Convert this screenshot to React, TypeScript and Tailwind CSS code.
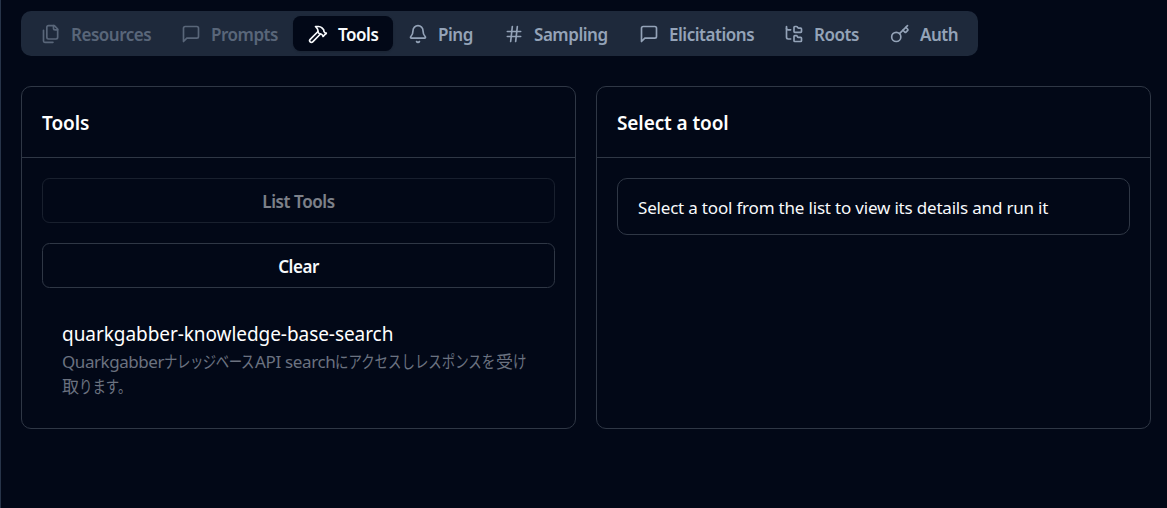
import type { ReactNode } from "react";
import { Bell, FolderTree, Hammer, Hash } from "lucide-react";

function Glyph({ children }: { children: ReactNode }) {
  return (
    <svg viewBox="0 0 24 24" fill="none" stroke="currentColor" strokeWidth="2" strokeLinecap="round" strokeLinejoin="round" className="size-5">
      {children}
    </svg>
  );
}

const FilesIcon = () => (
  <Glyph>
    <path d="M20 7h-3a2 2 0 0 1-2-2V2" />
    <path d="M9 18a2 2 0 0 1-2-2V4a2 2 0 0 1 2-2h7l4 4v10a2 2 0 0 1-2 2Z" />
    <path d="M3 7.6v12.8A1.6 1.6 0 0 0 4.6 22h9.8" />
  </Glyph>
);

const MessageIcon = () => (
  <Glyph>
    <path d="M21 15a2 2 0 0 1-2 2H7l-4 4V5a2 2 0 0 1 2-2h14a2 2 0 0 1 2 2z" />
  </Glyph>
);

const KeyIcon = () => (
  <Glyph>
    <path d="m15.5 7.5 2.3 2.3a1 1 0 0 0 1.4 0l2.1-2.1a1 1 0 0 0 0-1.4L19 4" />
    <path d="m21 2-9.6 9.6" />
    <circle cx="7.5" cy="15.5" r="5.5" />
  </Glyph>
);

const tabs = [
  { label: "Resources", icon: <FilesIcon />, tone: "opacity-50", width: "w-[140px]" },
  { label: "Prompts", icon: <MessageIcon />, tone: "opacity-50", width: "w-[127px]" },
  { label: "Tools", icon: <Hammer className="size-5" />, tone: "bg-[#020817] text-[#f8fafc] shadow-sm", width: "w-[100px]" },
  { label: "Ping", icon: <Bell className="size-5" />, tone: "", width: "w-[96px]" },
  { label: "Sampling", icon: <Hash className="size-5" />, tone: "", width: "w-[135px]" },
  { label: "Elicitations", icon: <MessageIcon />, tone: "", width: "w-[145px]" },
  { label: "Roots", icon: <FolderTree className="size-5" />, tone: "", width: "w-[106px]" },
  { label: "Auth", icon: <KeyIcon />, tone: "", width: "w-[98px]" },
];

function Panel({ title, children }: { title: ReactNode; children: ReactNode }) {
  return (
    <section className="flex h-[343px] flex-col rounded-[10px] border border-[#2f3745]">
      <header className="flex h-[71px] shrink-0 items-center border-b border-[#2f3745] px-5 pt-[2px]">
        <h3 className="text-[19px] font-semibold tracking-[-0.1px] text-white">{title}</h3>
      </header>
      <div className="flex flex-col p-5">{children}</div>
    </section>
  );
}

/* Kana set narrower than the full-width square. */
function Kana({ width, children }: { width: string; children: ReactNode }) {
  return (
    <span className={`block ${width}`}>
      <span className="block w-max origin-left scale-x-[0.79]">{children}</span>
    </span>
  );
}

export default function App() {
  return (
    <main className="h-[508px] w-[1167px] overflow-hidden border-l border-[#273449] bg-[#020817] pt-[11px] pr-4 pl-5 font-['Noto_Sans','Noto_Sans_CJK_JP',sans-serif] whitespace-nowrap text-[#f8fafc]">
      <nav className="flex h-[45px] w-[957px] items-center rounded-[10px] bg-[#1e293b] p-[5px] text-[#94a3b8]">
        {tabs.map((tab) => (
          <button key={tab.label} className={`flex h-[35px] shrink-0 items-center rounded-[7.5px] pl-[15px] ${tab.width} ${tab.tone}`}>
            <span className="mr-[10px] shrink-0">{tab.icon}</span>
            <span className="pt-[2px] text-[17px] font-semibold tracking-[-0.47px]">{tab.label}</span>
          </button>
        ))}
      </nav>

      <div className="mt-[30px] grid grid-cols-2 gap-5">
        <Panel title="Tools">
          <button className="h-[45px] rounded-[7.5px] border border-[#2f3745] pt-[2px] text-[17px] font-semibold tracking-[-0.4px] opacity-50">List Tools</button>
          <button className="mt-5 h-[45px] rounded-[7.5px] border border-[#2f3745] pt-[2px] text-[17px] font-semibold tracking-[-0.45px]">Clear</button>
          <div className="mt-[32px] pl-5">
            <div className="text-[19px] leading-[28px] tracking-[-0.06px] text-white">quarkgabber-knowledge-base-search</div>
            <div className="text-[17px] leading-[25px] text-[#6b7280]">
              <div className="flex pt-px">
                <span className="w-[102px] tracking-[-0.45px]">Quarkgabber</span>
                <Kana width="w-[91px]"><span className="tracking-[-0.6px]">ナレッジベース</span></Kana>
                <span className="w-[80px] tracking-[-0.35px]">API search</span>
                <Kana width="w-[161px]">にアクセスしレスポンスを</Kana>
                <span>受</span>
                <Kana width="w-[13px]">け</Kana>
              </div>
              <div className="flex">
                <span>取</span>
                <Kana width="w-[54px]">ります。</Kana>
              </div>
            </div>
          </div>
        </Panel>

        <Panel title="Select a tool">
          <div className="flex h-[57px] items-center rounded-[10px] border border-[#2f3745] px-5 pt-[2px] text-[17px] tracking-[-0.19px]">
            Select a tool from the list to view its details and run it
          </div>
        </Panel>
      </div>
    </main>
  );
}
